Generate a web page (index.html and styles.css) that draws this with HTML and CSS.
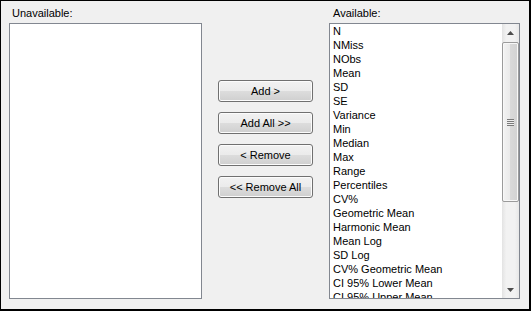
FILE: index.html
```
<!DOCTYPE html>
<html lang="en">
<head>
  <meta charset="UTF-8" />
  <title>Statistics Selector</title>
  <link rel="stylesheet" href="styles.css">
</head>
<body>

<div class="panel">
  <div class="column left">
    <div class="label">Unavailable:</div>
    <div class="listbox"></div>
  </div>

  <div class="actions">
    <button class="btn">Add &gt;</button>
    <button class="btn">Add All &gt;&gt;</button>
    <button class="btn">&lt; Remove</button>
    <button class="btn">&lt;&lt; Remove All</button>
  </div>

  <div class="column right">
    <div class="label">Available:</div>
    <div class="listbox">
      <ul class="items">
        <li>N</li>
        <li>NMiss</li>
        <li>NObs</li>
        <li>Mean</li>
        <li>SD</li>
        <li>SE</li>
        <li>Variance</li>
        <li>Min</li>
        <li>Median</li>
        <li>Max</li>
        <li>Range</li>
        <li>Percentiles</li>
        <li>CV%</li>
        <li>Geometric Mean</li>
        <li>Harmonic Mean</li>
        <li>Mean Log</li>
        <li>SD Log</li>
        <li>CV% Geometric Mean</li>
        <li>CI 95% Lower Mean</li>
        <li>CI 95% Upper Mean</li>
      </ul>
      <div class="scrollbar">
        <div class="arrow">
          <svg width="7" height="4" viewBox="0 0 7 4"><path d="M3.5 0 L7 4 L0 4 Z" fill="#4d4d4d"/></svg>
        </div>
        <div class="track">
          <div class="thumb"><span class="grip"></span></div>
        </div>
        <div class="arrow">
          <svg width="7" height="4" viewBox="0 0 7 4"><path d="M0 0 L7 0 L3.5 4 Z" fill="#4d4d4d"/></svg>
        </div>
      </div>
    </div>
  </div>
</div>

</body>
</html>
```

FILE: styles.css
```
:root {
  --bg: #f0f0f0;
  --frame: #000000;
  --list-border: #828790;
  --text: #000000;
}

body {
  margin: 0;
  font-family: "Liberation Sans", Arial, sans-serif;
  font-size: 11px;
  color: var(--text);
}

.panel {
  width: 531px;
  height: 311px;
  box-sizing: border-box;
  border-top: 1px solid var(--frame);
  border-left: 1px solid var(--frame);
  border-right: 2px solid var(--frame);
  border-bottom: 2px solid var(--frame);
  background: var(--bg);
  padding: 5px 9px 10px 8px;
  display: flex;
  gap: 16px;
}

.column {
  display: flex;
  flex-direction: column;
}

.column.left {
  width: 193px;
}

.column.right {
  width: 191px;
}

.label {
  line-height: 14px;
  height: 14px;
  padding-left: 3px;
  margin-bottom: 3px;
}

.right .label {
  padding-left: 4px;
}

.listbox {
  flex: 1;
  background: #ffffff;
  border: 1px solid var(--list-border);
  display: flex;
  overflow: hidden;
}

.items {
  flex: 1;
  list-style: none;
  margin: 0;
  padding: 0 0 0 3px;
  overflow: hidden;
}

.items li {
  line-height: 14px;
  height: 14px;
  white-space: nowrap;
}

/* buttons */
.actions {
  width: 95px;
  display: flex;
  flex-direction: column;
  gap: 10px;
  padding-top: 74px;
}

.btn {
  height: 22px;
  width: 95px;
  padding: 0;
  font-family: inherit;
  font-size: 11px;
  color: var(--text);
  border: 1px solid #707070;
  border-radius: 3px;
  background: linear-gradient(#f2f2f2 0%, #ebebeb 50%, #dddddd 50%, #cfcfcf 100%);
  box-shadow: inset 0 0 0 1px #fcfcfc;
}

/* scrollbar */
.scrollbar {
  width: 17px;
  display: flex;
  flex-direction: column;
  background: linear-gradient(to right, #e3e3e3, #f2f2f2 25%, #f2f2f2 75%, #e8e8e8);
}

.arrow {
  height: 17px;
  display: flex;
  align-items: center;
  justify-content: center;
}

.track {
  flex: 1;
  padding-top: 1px;
}

.thumb {
  height: 160px;
  box-sizing: border-box;
  border: 1px solid #9b9b9b;
  border-radius: 2px;
  background: linear-gradient(to right, #f3f3f3, #e9e9e9 50%, #d9d9d9 50%, #d2d2d2);
  box-shadow: inset 0 0 0 1px #f8f8f8;
  display: flex;
  align-items: center;
  justify-content: center;
}

.grip {
  width: 7px;
  height: 7px;
  background: repeating-linear-gradient(#7a7a7a 0, #7a7a7a 1px, #eeeeee 1px, #eeeeee 2px);
}
```
